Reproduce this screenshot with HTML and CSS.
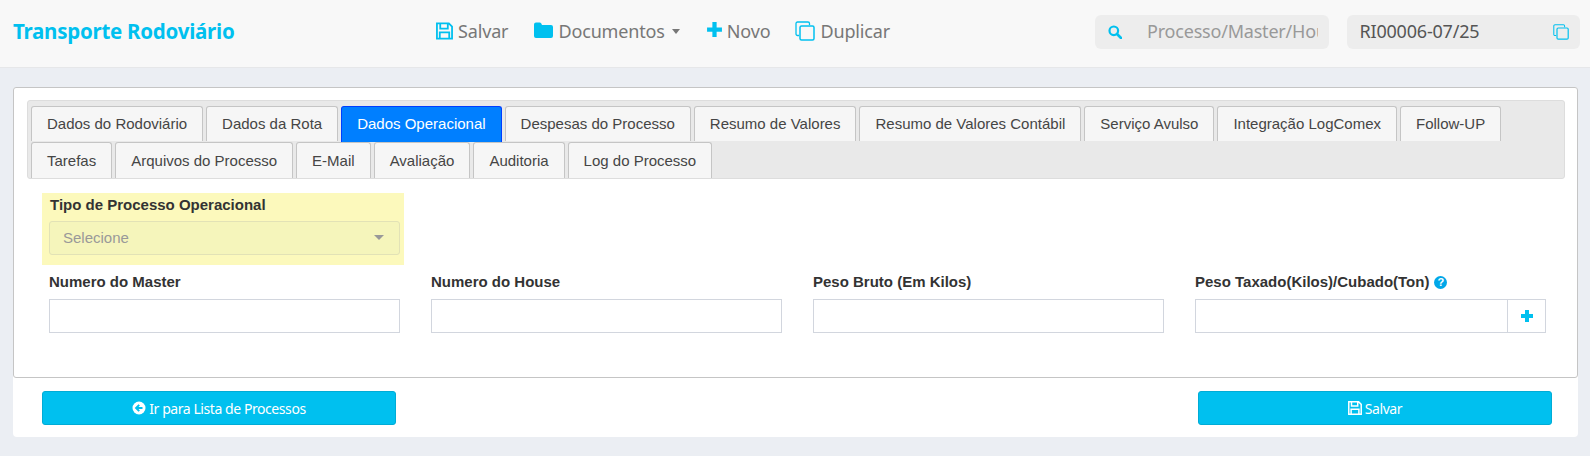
FILE: index.html
```html
<!DOCTYPE html>
<html lang="pt-BR">
<head>
<meta charset="utf-8">
<title>Transporte Rodoviário</title>
<link rel="stylesheet" href="styles.css">
</head>
<body>
<svg class="defs" width="0" height="0" aria-hidden="true">
  <symbol id="i-save" viewBox="0 0 18 18"><path d="M1 1h12.6L17 4.400V17H1z M4.500 1v5.500h8V1 M4 17v-6.500h10V17" fill="none" stroke="currentColor" stroke-width="1.900"/></symbol>
  <symbol id="i-copy" viewBox="0 0 20 20"><path d="M4 14.500H2.500a1.500 1.500 0 0 1-1.500-1.500V2.500A1.500 1.500 0 0 1 2.500 1H13a1.500 1.500 0 0 1 1.500 1.500V4" fill="none" stroke="currentColor" stroke-width="1.300"/><rect x="5" y="5" width="14" height="14" rx="1.500" fill="none" stroke="currentColor" stroke-width="1.500"/></symbol>
</svg>
<header class="topbar">
  <div class="brand">Transporte Rodoviário</div>
  <nav class="menu">
    <a class="menu-item item-save"><svg class="ic ic-save"><use href="#i-save"/></svg>Salvar</a>
    <a class="menu-item item-docs"><svg class="ic ic-folder" viewBox="0 0 19 16"><path d="M0 2.500A2 2 0 0 1 2 .5h3.500a2 2 0 0 1 1.800 1.100L8 3h9a2 2 0 0 1 2 2v9a2 2 0 0 1-2 2H2a2 2 0 0 1-2-2z" fill="currentColor"/></svg>Documentos<span class="caret"></span></a>
    <a class="menu-item item-new"><svg class="ic ic-plus" viewBox="0 0 16 16"><path d="M6 1h4v5h5v4h-5v5H6v-5H1V6h5z" fill="currentColor"/></svg>Novo</a>
    <a class="menu-item"><svg class="ic ic-dup"><use href="#i-copy"/></svg>Duplicar</a>
  </nav>
  <div class="search-box">
    <svg class="ic-search" viewBox="0 0 14 14"><circle cx="5.800" cy="5.800" r="4.300" fill="none" stroke="currentColor" stroke-width="2.200"/><path d="M9 9l4 4" stroke="currentColor" stroke-width="2.600" stroke-linecap="round"/></svg>
    <input class="search-input" type="text" placeholder="Processo/Master/House">
  </div>
  <div class="ref-box">
    <span class="ref-text">RI00006-07/25</span>
    <svg class="ic-ref"><use href="#i-copy"/></svg>
  </div>
</header>

<main class="page">
  <section class="card">
    <div class="panel">
      <div class="tabs">
        <ul class="tab-row first">
          <li class="tab">Dados do Rodoviário</li>
          <li class="tab">Dados da Rota</li>
          <li class="tab active">Dados Operacional</li>
          <li class="tab">Despesas do Processo</li>
          <li class="tab">Resumo de Valores</li>
          <li class="tab">Resumo de Valores Contábil</li>
          <li class="tab">Serviço Avulso</li>
          <li class="tab">Integração LogComex</li>
          <li class="tab">Follow-UP</li>
        </ul>
        <ul class="tab-row second">
          <li class="tab">Tarefas</li>
          <li class="tab">Arquivos do Processo</li>
          <li class="tab">E-Mail</li>
          <li class="tab">Avaliação</li>
          <li class="tab">Auditoria</li>
          <li class="tab">Log do Processo</li>
        </ul>
      </div>
      <div class="highlight">
        <label class="label hl-label">Tipo de Processo Operacional</label>
        <div class="select"><span>Selecione</span><i class="select-caret"></i></div>
      </div>
      <div class="fields">
        <div class="field"><label class="label">Numero do Master</label><input class="input" type="text"></div>
        <div class="field"><label class="label">Numero do House</label><input class="input" type="text"></div>
        <div class="field"><label class="label">Peso Bruto (Em Kilos)</label><input class="input" type="text"></div>
        <div class="field">
          <label class="label">Peso Taxado(Kilos)/Cubado(Ton)<span class="help">?</span></label>
          <div class="group"><input class="input grow" type="text"><span class="addon"><svg viewBox="0 0 16 16"><path d="M6 2h4v4h4v4h-4v4H6v-4H2V6h4z" fill="currentColor"/></svg></span></div>
        </div>
      </div>
    </div>
    <div class="actions">
      <button class="btn" type="button"><svg class="btn-ic" viewBox="0 0 14 14"><circle cx="7" cy="7" r="6.500" fill="currentColor"/><path d="M10.500 7H4.500M7.200 3.900L4.100 7l3.100 3.100" fill="none" stroke="#00c0ef" stroke-width="2"/></svg>Ir para Lista de Processos</button>
      <button class="btn" type="button"><svg class="btn-ic"><use href="#i-save"/></svg>Salvar</button>
    </div>
  </section>
</main>
</body>
</html>
```
FILE: styles.css
```css
* { box-sizing: border-box; }
html, body { margin: 0; padding: 0; }
body {
  width: 1590px;
  height: 456px;
  overflow: hidden;
  background: #ebeef3;
  font-family: "Liberation Sans", Arial, sans-serif;
  color: #333;
}
.defs { display: block; height: 0; }

.topbar {
  display: flex;
  align-items: center;
  height: 68px;
  padding: 0 10px 4px 13px;
  background: #f8f8f8;
  border-bottom: 1px solid #e6e7e9;
  font-family: "Noto Sans", sans-serif;
}
.brand {
  width: 423px;
  padding-bottom: 2px;
  font-size: 20.500px;
  font-weight: 700;
  color: #00c0ef;
  letter-spacing: -0.250px;
}
.menu { display: flex; align-items: center; flex: 1; padding-bottom: 2px; }
.menu-item {
  display: flex;
  align-items: center;
  font-size: 18px;
  color: #777;
  letter-spacing: -0.150px;
}
.item-save { margin-right: 26px; }
.item-docs { margin-right: 26px; }
.item-new { margin-right: 25px; }
.ic { color: #00c0ef; flex: none; }
.ic-save { width: 17px; height: 18px; margin-right: 5px; }
.ic-folder { width: 19px; height: 16px; margin-right: 5px; margin-top: -2px; }
.ic-plus { width: 17px; height: 17px; margin-right: 4px; margin-top: -2px; }
.ic-dup { width: 20px; height: 20px; margin-right: 5px; }
.caret {
  margin-left: 7px;
  margin-top: 2px;
  border-top: 5px solid #777;
  border-left: 4.500px solid transparent;
  border-right: 4.500px solid transparent;
}
.search-box, .ref-box {
  display: flex;
  align-items: center;
  width: 233.500px;
  height: 34px;
  border-radius: 6px;
  background: #ededed;
}
.search-box { padding: 0 11px 0 13px; margin-right: 18px; }
.ic-search { width: 14px; height: 14px; color: #00c0ef; flex: none; margin-right: 25px; }
.search-input {
  flex: 1;
  min-width: 0;
  border: 0;
  padding: 0 0 2px;
  background: transparent;
  font: 18px "Noto Sans", sans-serif;
  letter-spacing: -0.200px;
}
.search-input::placeholder { color: #999; opacity: 1; }
.ref-box { padding: 0 11px 0 13px; justify-content: space-between; }
.ref-text { padding-bottom: 2px; font-size: 18px; color: #555; letter-spacing: -0.200px; }
.ic-ref { width: 16px; height: 16px; color: #00c0ef; }

.page { padding: 19px 12px 0 13px; }
.card {
  height: 350px;
  background: #fff;
  border-radius: 4px;
}
.panel {
  height: 291px;
  padding: 12px 12px 0 13px;
  border: 1px solid #c5c5c5;
  border-radius: 3px;
}
.tabs {
  height: 79px;
  padding: 5px 0 0 3px;
  background: #e9e9e9;
  border: 1px solid #dddddd;
  border-radius: 3px;
}
.tab-row {
  display: flex;
  align-items: flex-start;
  gap: 3px;
  list-style: none;
  margin: 0;
  padding: 0;
  height: 36px;
}
.tab {
  height: 36px;
  padding: 0 15px;
  line-height: 35px;
  font-size: 15px;
  color: #454545;
  white-space: nowrap;
  background: #f6f6f6;
  border: 1px solid #c5c5c5;
  border-bottom: 0;
  border-radius: 3px 3px 0 0;
}
.first .tab { height: 35px; line-height: 34px; }
.first .tab.active { height: 36px; }
.tab.active {
  color: #fff;
  background: #007fff;
  border-color: #003eff;
}
.highlight {
  width: 362px;
  height: 72px;
  margin: 14px 0 0 15px;
  padding: 3px 4px 0 7px;
  background: #fcf9bc;
}
.label {
  display: block;
  font-size: 15px;
  font-weight: 700;
  line-height: 18px;
  color: #333;
}
.hl-label { padding-left: 1px; }
.select {
  display: flex;
  align-items: center;
  justify-content: space-between;
  height: 34px;
  margin-top: 7px;
  padding: 0 15px 2px 13px;
  font-size: 15px;
  color: #999;
  background: #f5f5bb;
  border: 1px solid #e2e2b6;
  border-radius: 3px;
}
.select-caret {
  border-top: 5px solid #999;
  border-left: 5px solid transparent;
  border-right: 5px solid transparent;
}
.fields {
  display: flex;
  gap: 31px;
  margin: 8px 0 0 22px;
  width: 1497px;
}
.field { flex: 1 1 0; min-width: 0; }
.input {
  display: block;
  width: 100%;
  height: 34px;
  margin-top: 8px;
  border: 1px solid #d2d6de;
  background: #fff;
}
.group { display: flex; margin-top: 8px; }
.input.grow { flex: 1; width: auto; min-width: 0; margin-top: 0; }
.addon {
  display: flex;
  align-items: center;
  justify-content: center;
  width: 38px;
  height: 34px;
  border: 1px solid #d2d6de;
  border-left: 0;
  color: #00c0ef;
}
.addon svg { width: 16px; height: 16px; }
.help {
  display: inline-block;
  width: 13px;
  height: 13px;
  margin-left: 5px;
  border-radius: 50%;
  background: #00a7e8;
  color: #fff;
  font-size: 11px;
  line-height: 13px;
  text-align: center;
  vertical-align: 1px;
}
.actions {
  display: flex;
  justify-content: space-between;
  padding: 13px 26px 0 29px;
}
.btn {
  display: flex;
  align-items: center;
  justify-content: center;
  width: 354px;
  height: 34px;
  padding: 0;
  color: #fff;
  background: #00c0ef;
  border: 1px solid #00acd6;
  border-radius: 3px;
  font: 14px "Noto Sans", sans-serif;
  letter-spacing: -0.430px;
}
.btn-ic { width: 14px; height: 14px; margin-right: 3px; color: #fff; }
```
